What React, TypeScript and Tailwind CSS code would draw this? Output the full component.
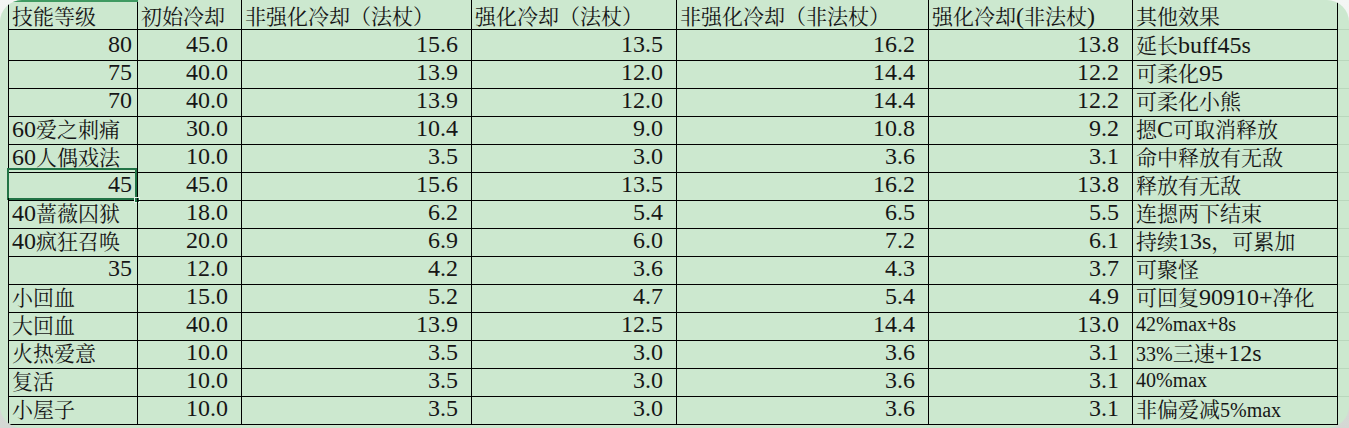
import React from "react"

const headers = [
  "技能等级",
  "初始冷却",
  "非强化冷却（法杖）",
  "强化冷却（法杖）",
  "非强化冷却（非法杖）",
  "强化冷却(非法杖)",
  "其他效果",
]

const rows = [
  ["80", "45.0", "15.6", "13.5", "16.2", "13.8", "延长buff45s"],
  ["75", "40.0", "13.9", "12.0", "14.4", "12.2", "可柔化95"],
  ["70", "40.0", "13.9", "12.0", "14.4", "12.2", "可柔化小熊"],
  ["60爱之刺痛", "30.0", "10.4", "9.0", "10.8", "9.2", "摁C可取消释放"],
  ["60人偶戏法", "10.0", "3.5", "3.0", "3.6", "3.1", "命中释放有无敌"],
  ["45", "45.0", "15.6", "13.5", "16.2", "13.8", "释放有无敌"],
  ["40蔷薇囚狱", "18.0", "6.2", "5.4", "6.5", "5.5", "连摁两下结束"],
  ["40疯狂召唤", "20.0", "6.9", "6.0", "7.2", "6.1", "持续13s，可累加"],
  ["35", "12.0", "4.2", "3.6", "4.3", "3.7", "可聚怪"],
  ["小回血", "15.0", "5.2", "4.7", "5.4", "4.9", "可回复90910+净化"],
  ["大回血", "40.0", "13.9", "12.5", "14.4", "13.0", "42%max+8s"],
  ["火热爱意", "10.0", "3.5", "3.0", "3.6", "3.1", "33%三速+12s"],
  ["复活", "10.0", "3.5", "3.0", "3.6", "3.1", "40%max"],
  ["小屋子", "10.0", "3.5", "3.0", "3.6", "3.1", "非偏爱减5%max"],
]

// grid columns follow the sheet's column widths
const cols = "grid grid-cols-[130px_104px_230px_205px_252px_204px_205px_1fr]"

const cjk = /([\u3000-\u303f\u4e00-\u9fff\uff00-\uffef]+)/

// split a cell into CJK runs and latin runs, each with its own font
function Runs({ text }: { text: string }) {
  return (
    <>
      {text
        .split(cjk)
        .filter((s) => s.length > 0)
        .map((s, i) =>
          cjk.test(s) ? (
            <span key={i} className="font-['Noto_Serif_CJK_SC','Noto_Sans_CJK_SC',serif] text-[21px]">
              {s}
            </span>
          ) : (
            <span
              key={i}
              className={`font-['Liberation_Serif',serif] ${s.includes("%") ? "text-[20px]" : "text-[24px]"}`}
            >
              {s}
            </span>
          )
        )}
    </>
  )
}

const isNumber = (s: string) => /^[\d.]+$/.test(s)

// the cooldown columns carry a trailing space in their number format
function cellPad(cell: string, c: number) {
  if (!isNumber(cell)) return "pl-[3px] pr-[3px] text-left"
  if (c === 0) return "pr-[5px] text-right"
  return "pr-[13px] text-right"
}

export default function App() {
  return (
    <div className="w-[1349px] h-[428px] bg-gradient-to-b from-[#f4f6f4] to-[#d4d8d4]">
      <div className="relative w-full h-full rounded-[22px] overflow-hidden bg-[#cce8cf] text-[#161616]">
        {/* column A header highlight */}
        <div className="absolute top-0 left-0 w-[138px] h-[2px] bg-[#3f9a62]" />

        <div className="pl-[8px]">
          {/* header row */}
          <div className={`${cols} h-[30px]`}>
            {headers.map((h, i) => (
              <div
                key={h}
                className={`border-r border-b border-black px-[3px] pt-[2px] leading-[27px] whitespace-nowrap overflow-hidden ${
                  i === 0 ? "border-l" : ""
                }`}
              >
                <Runs text={h} />
              </div>
            ))}
            <div className="border-b border-[#b9d6bc]" />
          </div>

          {/* data rows */}
          {rows.map((row, r) => (
            <div key={r} className={`${cols} h-[28px]`}>
              {row.map((cell, c) => (
                <div
                  key={c}
                  className={`relative border-r border-b border-black pt-[1px] leading-[26px] whitespace-nowrap ${
                    c === 0 ? "border-l" : ""
                  } ${cellPad(cell, c)}`}
                >
                  <Runs text={cell} />
                  {r === 5 && c === 0 && (
                    <>
                      <div className="absolute -left-[2px] -top-[2px] right-0 bottom-0 border-2 border-[#217346] pointer-events-none" />
                      <div className="absolute -right-[3px] -bottom-[3px] w-[6px] h-[6px] bg-[#217346] border border-[#e8f4ea]" />
                    </>
                  )}
                </div>
              ))}
              <div className="border-b border-[#b9d6bc]" />
            </div>
          ))}
        </div>
      </div>
    </div>
  )
}
